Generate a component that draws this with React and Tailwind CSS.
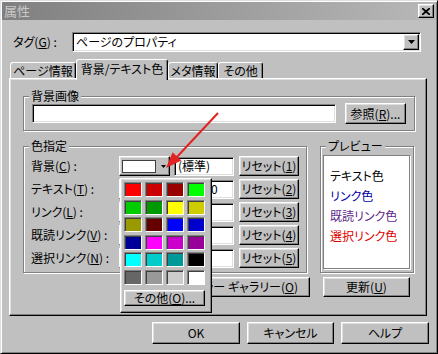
import React from 'react';

const raised =
  "border border-t-white border-l-white border-r-black border-b-black shadow-[inset_-1px_-1px_0_#808080,inset_1px_1px_0_#dfdfdf]";
const sunken =
  "border border-t-[#808080] border-l-[#808080] border-r-white border-b-white shadow-[inset_1px_1px_0_#000,inset_-1px_-1px_0_#dfdfdf]";

// palette of the popup, row by row
const swatches = [
  "bg-[#ff0000]", "bg-[#cc0000]", "bg-[#990000]", "bg-[#00ff00]",
  "bg-[#00cc00]", "bg-[#009900]", "bg-[#ffff00]", "bg-[#cccc00]",
  "bg-[#999900]", "bg-[#660000]", "bg-[#0000ff]", "bg-[#0000cc]",
  "bg-[#000099]", "bg-[#ff00ff]", "bg-[#cc00cc]", "bg-[#990099]",
  "bg-[#00ffff]", "bg-[#00cccc]", "bg-[#009999]", "bg-[#000000]",
  "bg-[#666666]", "bg-[#999999]", "bg-[#cccccc]", "bg-[#ffffff]",
];

const colorRows = [
  { label: "背景", key: "C", value: "(標準)", fit: "pl-[3px]", n: "1", swatch: "bg-white" },
  { label: "テキスト", key: "T", value: "#000000", fit: "pl-[2px] tracking-[-1px]", n: "2", swatch: "bg-black" },
  { label: "リンク", key: "L", value: "", fit: "", n: "3", swatch: "bg-[#0000ff]" },
  { label: "既読リンク", key: "V", value: "", fit: "", n: "4", swatch: "bg-[#800080]" },
  { label: "選択リンク", key: "N", value: "", fit: "", n: "5", swatch: "bg-[#ff0000]" },
];

const Key = ({ k }) => <span className="underline underline-offset-[1px]">{k}</span>;

const Btn = ({ className = "", children }) => (
  <div className={`${raised} flex items-center justify-center bg-[#c0c0c0] ${className}`}>
    {children}
  </div>
);

const Field = ({ className = "", children }) => (
  <div className={`${sunken} flex items-center bg-white ${className}`}>{children}</div>
);

const Group = ({ label, className = "", children }) => (
  <div className={`relative border border-[#808080] shadow-[1px_1px_0_#fff,inset_1px_1px_0_#fff] ${className}`}>
    <span className="absolute -top-[8px] left-[5px] bg-[#c0c0c0] px-[2px] leading-[14px]">{label}</span>
    {children}
  </div>
);

const DownArrow = ({ w = 7, h = 4 }) => (
  <svg width={w} height={h} viewBox={`0 0 ${w} ${h}`}>
    <polygon points={`0,0 ${w},0 ${w / 2},${h}`} fill="#000" />
  </svg>
);

const Tab = ({ selected, className = "", children }) => (
  <div
    className={`flex items-center justify-center rounded-t-[3px] border-t border-l border-r border-t-white border-l-white border-r-black bg-[#c0c0c0] shadow-[inset_-1px_0_0_#808080] ${
      selected ? "relative z-10 -mb-[1px] h-[21px] pb-[2px]" : "mb-[1px] h-[16px]"
    } ${className}`}
  >
    {children}
  </div>
);

export default function App() {
  return (
    <div className="relative h-[354px] w-[438px] overflow-hidden bg-[#c0c0c0] font-['Noto_Sans_CJK_JP','Noto_Sans',sans-serif] text-[12px] leading-[14px] text-black [font-feature-settings:'palt']">
      <div className="flex h-full flex-col border border-t-[#dfdfdf] border-l-[#dfdfdf] border-r-black border-b-black p-[1px] shadow-[inset_1px_1px_0_#fff,inset_-1px_-1px_0_#808080]">
        {/* title bar */}
        <div className="flex h-[18px] items-center justify-between bg-linear-to-r from-[#808080] to-[#b8b8b8] pl-[2px] pr-[2px]">
          <span className="text-[13px] text-[#c8c8c8]">属性</span>
          <Btn className="h-[14px] w-[16px]">
            <svg width="8" height="7" viewBox="0 0 8 7">
              <path d="M0 0 L8 7 M8 0 L0 7" stroke="#000" strokeWidth="1.8" />
            </svg>
          </Btn>
        </div>

        {/* tag row */}
        <div className="mt-[12px] flex h-[20px] items-center pl-[11px]">
          <span className="w-[59px]">
            タグ(<Key k="G" />) :
          </span>
          <Field className="h-[20px] w-[349px] justify-between">
            <span className="pl-[3px]">ページのプロパティ</span>
            <Btn className="mr-[1px] h-[16px] w-[16px]">
              <DownArrow />
            </Btn>
          </Field>
        </div>

        {/* tabs */}
        <div className="mt-[7px] flex h-[20px] items-end pl-[8px]">
          <Tab className="w-[66px]">ページ情報</Tab>
          <Tab selected className="w-[92px]">背景/テキスト色</Tab>
          <Tab className="w-[50px]">メタ情報</Tab>
          <Tab className="w-[45px]">その他</Tab>
        </div>

        {/* tab panel */}
        <div className={`${raised} -mt-[1px] ml-[7px] h-[238px] w-[418px] pl-[13px] pt-[17px]`}>
          <Group label="背景画像" className="h-[35px] w-[392px]">
            <div className="flex h-full items-center pl-[8px]">
              <Field className="h-[19px] w-[304px]" />
              <Btn className="ml-[9px] h-[21px] w-[61px]">
                参照(<Key k="R" />)...
              </Btn>
            </div>
          </Group>

          <div className="mt-[15px] flex">
            <Group label="色指定" className="h-[127px] w-[284px]">
              <div className="flex flex-col gap-[3px] pl-[7px] pt-[9px]">
                {colorRows.map((r) => (
                  <div key={r.key} className="flex h-[20px] items-center">
                    <span className="w-[88px]">
                      {r.label}(<Key k={r.key} />) :
                    </span>
                    <Btn className="h-[20px] w-[51px] justify-start pl-[2px]">
                      <div className={`h-[13px] w-[34px] border border-[#404040] ${r.swatch}`} />
                      <div className="ml-[5px]">
                        <DownArrow w={5} h={3} />
                      </div>
                    </Btn>
                    <Field className={`ml-[4px] h-[19px] w-[60px] ${r.fit}`}>{r.value}</Field>
                    <Btn className="ml-[5px] h-[20px] w-[60px]">
                      リセット(<Key k={r.n} />)
                    </Btn>
                  </div>
                ))}
              </div>
            </Group>

            <Group label="プレビュー" className="ml-[13px] h-[127px] w-[94px]">
              <div className="ml-[2px] mt-[8px] flex h-[114px] w-[87px] flex-col border border-[#808080] bg-white pl-[6px] pt-[10px] leading-[20px] shadow-[1px_1px_0_#fff]">
                <span>テキスト色</span>
                <span className="text-[#0000a8]">リンク色</span>
                <span className="text-[#602888]">既読リンク色</span>
                <span className="text-[#e00000]">選択リンク色</span>
              </div>
            </Group>
          </div>

          <div className="mt-[4px] flex">
            <Btn className="ml-[136px] h-[20px] w-[151px] justify-end pr-[11px]">
              カラー ギャラリー(<Key k="O" />)
            </Btn>
            <Btn className="ml-[13px] h-[20px] w-[87px]">
              更新(<Key k="U" />)
            </Btn>
          </div>
        </div>

        {/* dialog buttons */}
        <div className="mt-[6px] flex justify-end gap-[7px] pr-[7px]">
          <Btn className="h-[22px] w-[88px]">OK</Btn>
          <Btn className="h-[22px] w-[87px]">キャンセル</Btn>
          <Btn className="h-[22px] w-[88px]">ヘルプ</Btn>
        </div>
      </div>

      {/* colour popup */}
      <div className={`${raised} absolute left-[120px] top-[178px] h-[135px] w-[92px] bg-[#c0c0c0] pl-[3px] pt-[3px]`}>
        <div className="grid grid-cols-[repeat(4,18px)] gap-x-[3px] gap-y-[2.5px]">
          {swatches.map((c) => (
            <div
              key={c}
              className={`h-[15px] border border-t-[#808080] border-l-[#808080] border-r-white border-b-white shadow-[inset_1px_1px_0_#404040] ${c}`}
            />
          ))}
        </div>
        <Btn className="mt-[5px] h-[16px] w-[81px]">
          その他(<Key k="O" />)...
        </Btn>
      </div>

      {/* red pointer arrow */}
      <svg className="pointer-events-none absolute left-0 top-0" width="438" height="354">
        <line x1="218" y1="113" x2="175" y2="159" stroke="#e32222" strokeWidth="2" />
        <polygon points="166,168 172.6,152.3 181.4,160.5" fill="#e32222" />
      </svg>
    </div>
  );
}
